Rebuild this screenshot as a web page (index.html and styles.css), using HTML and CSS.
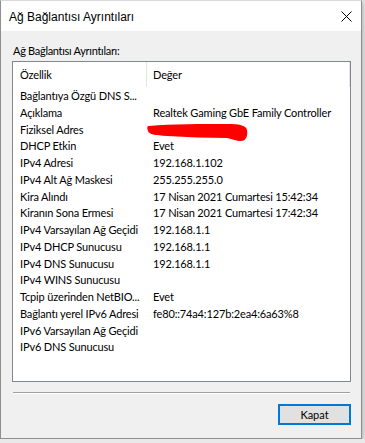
FILE: index.html
```html
<!DOCTYPE html>
<html>
<head>
    <title>Ağ Bağlantısı Ayrıntıları</title>
    <link rel="stylesheet" href="styles.css">
</head>
<body>
    <div class="window">
        <div class="titlebar">
            <span class="title">Ağ Bağlantısı Ayrıntıları</span>
            <svg class="close" width="11" height="11" viewBox="0 0 11 11">
                <path d="M0.5 0.5 L10.5 10.5 M10.5 0.5 L0.5 10.5" stroke="#000" stroke-width="1" fill="none"/>
            </svg>
        </div>
        <div class="content">
            <div class="label">Ağ Bağlantısı Ayrıntıları:</div>
            <div class="listbox">
                <div class="list-header">
                    <div class="col-head first">Özellik</div>
                    <div class="col-head last">Değer</div>
                </div>
                <div class="rows">
                    <div class="row"><span class="prop">Bağlantıya Özgü DNS S...</span><span class="val"></span></div>
                    <div class="row"><span class="prop">Açıklama</span><span class="val">Realtek Gaming GbE Family Controller</span></div>
                    <div class="row"><span class="prop">Fiziksel Adres</span><span class="val hidden-val"><svg class="scribble" width="102" height="20" viewBox="0 0 102 20"><path d="M2 3 C25 1 55 1 80 1 C92 1 99 2 100 7 C101 13 99 18 94 18 C89 18 86 16 80 15 C60 15 40 14 20 13 C9 12 2 12 1 8 C0 5 0 3 2 3 Z" fill="#ff0000"/></svg></span></div>
                    <div class="row"><span class="prop">DHCP Etkin</span><span class="val">Evet</span></div>
                    <div class="row"><span class="prop">IPv4 Adresi</span><span class="val">192.168.1.102</span></div>
                    <div class="row"><span class="prop">IPv4 Alt Ağ Maskesi</span><span class="val">255.255.255.0</span></div>
                    <div class="row"><span class="prop">Kira Alındı</span><span class="val">17 Nisan 2021 Cumartesi 15:42:34</span></div>
                    <div class="row"><span class="prop">Kiranın Sona Ermesi</span><span class="val">17 Nisan 2021 Cumartesi 17:42:34</span></div>
                    <div class="row"><span class="prop">IPv4 Varsayılan Ağ Geçidi</span><span class="val">192.168.1.1</span></div>
                    <div class="row"><span class="prop">IPv4 DHCP Sunucusu</span><span class="val">192.168.1.1</span></div>
                    <div class="row"><span class="prop">IPv4 DNS Sunucusu</span><span class="val">192.168.1.1</span></div>
                    <div class="row"><span class="prop">IPv4 WINS Sunucusu</span><span class="val"></span></div>
                    <div class="row"><span class="prop">Tcpip üzerinden NetBIO...</span><span class="val">Evet</span></div>
                    <div class="row"><span class="prop">Bağlantı yerel IPv6 Adresi</span><span class="val">fe80::74a4:127b:2ea4:6a63%8</span></div>
                    <div class="row"><span class="prop">IPv6 Varsayılan Ağ Geçidi</span><span class="val"></span></div>
                    <div class="row"><span class="prop">IPv6 DNS Sunucusu</span><span class="val"></span></div>
                </div>
            </div>
            <div class="separator"></div>
            <div class="footer">
                <button class="btn">Kapat</button>
            </div>
        </div>
    </div>
</body>
</html>
```

FILE: styles.css
```css
body {
    margin: 0;
    background-color: #e9e9e9;
    font-family: Lato, 'Liberation Sans', sans-serif;
    font-size: 11px;
    letter-spacing: -0.15px;
    color: #000;
}

.window {
    width: 360px;
    height: 437px;
    border: 1px solid #8f8f8f;
    border-top-color: #d9d9d9;
    background-color: #f0f0f0;
    box-shadow: 0 2px 6px rgba(0, 0, 0, 0.35);
    display: flex;
    flex-direction: column;
}

.titlebar {
    height: 30px;
    background-color: #fff;
    display: flex;
    align-items: center;
    justify-content: space-between;
    padding: 0 9px 0 8px;
}

.title {
    font-family: 'Liberation Sans', Arial, sans-serif;
    font-size: 12px;
    letter-spacing: 0;
    margin-top: 1px;
}

.close {
    display: block;
    margin-top: 1px;
}

.content {
    flex: 1;
    padding: 12px 10px 0 11px;
}

.label {
    line-height: 16px;
    padding-left: 1px;
    margin-bottom: 2px;
    letter-spacing: -0.3px;
}

.listbox {
    height: 319px;
    border: 1px solid #828790;
    background-color: #fff;
    overflow: hidden;
}

.list-header {
    display: flex;
    height: 25px;
}

.col-head {
    line-height: 25px;
}

.col-head.first {
    width: 126px;
    flex-shrink: 0;
    padding-left: 7px;
    border-right: 1px solid #e5e5e5;
}

.col-head.last {
    flex: 1;
    padding-left: 6px;
    border-right: 1px solid #e5e5e5;
}

.rows {
    padding-top: 1px;
}

.row {
    display: flex;
    height: 16.75px;
    line-height: 16.75px;
    white-space: nowrap;
}

.prop {
    width: 127px;
    flex-shrink: 0;
    padding-left: 7px;
    overflow: hidden;
}

.val {
    flex: 1;
    padding-left: 6px;
}

.hidden-val {
    position: relative;
}

.scribble {
    position: absolute;
    left: 0;
    top: 1px;
}

.separator {
    margin-top: 10px;
    border-top: 1px solid #a0a0a0;
    border-bottom: 1px solid #fff;
    margin-right: 1px;
    margin-left: 1px;
}

.footer {
    display: flex;
    justify-content: flex-end;
    margin-top: 10px;
}

.btn {
    width: 73px;
    height: 21px;
    border: 2px solid #0078d7;
    background-color: #e1e1e1;
    font-family: Lato, 'Liberation Sans', sans-serif;
    font-size: 11px;
    color: #000;
    padding: 0;
}
```
